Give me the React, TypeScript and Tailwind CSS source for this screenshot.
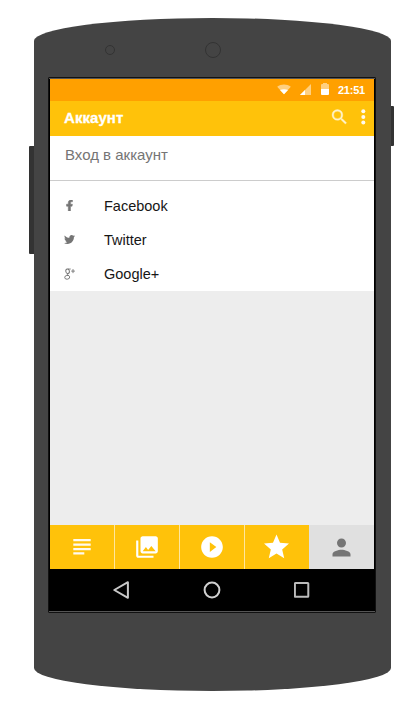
import React from "react";
import { FaFacebookF, FaTwitter } from "react-icons/fa";

function StatusBar() {
  return (
    <div className="flex h-[22px] shrink-0 items-center bg-[#ffa000] pl-[227px] text-white">
      <svg className="-mt-px h-[11px] w-[14px] shrink-0" viewBox="0 0 15 11">
        <path d="M0.2 2.6C4.4-.5 10.6-.5 14.8 2.6L7.5 10.7Z" fill="#fff" fillOpacity=".5" />
        <path d="M3.2 6C5.8 4.8 9.2 4.8 11.8 6L7.5 10.7Z" fill="#fff" />
      </svg>
      <svg className="-mt-px ml-[9px] h-[11px] w-[11px] shrink-0" viewBox="0 0 11 11">
        <path d="M0 11L11 0V11Z" fill="#fff" fillOpacity=".5" />
        <path d="M0 11L5 6V11Z" fill="#fff" />
      </svg>
      <svg className="-mt-[3px] ml-[10px] h-[12px] w-[8px] shrink-0" viewBox="0 0 8 12">
        <path d="M0 2q0-1 1-1H2V0H6V1H7q1 0 1 1V6H0Z" fill="#fff" fillOpacity=".5" />
        <path d="M0 6H8V11q0 1-1 1H1q-1 0-1-1Z" fill="#fff" />
      </svg>
      <span className="ml-[9px] text-[11px] font-bold leading-none tracking-[-0.25px]">21:51</span>
    </div>
  );
}

function AppBar() {
  return (
    <div className="flex h-[35px] shrink-0 items-center bg-[#ffc20a] pl-[14px] text-white">
      <h1 className="w-[265px] pb-[2px] text-[15px] font-bold leading-none tracking-[0.05px] [-webkit-text-stroke:0.3px_#fff]">Аккаунт</h1>
      <svg className="-mt-[4px] h-[20px] w-[21px] shrink-0 fill-[#fff3cb] stroke-[#fff3cb] stroke-[0.4]" viewBox="0 0 24 24">
        <path d="M15.5 14h-.79l-.28-.27A6.47 6.47 0 0 0 16 9.5 6.5 6.5 0 1 0 9.5 16c1.61 0 3.09-.59 4.23-1.57l.27.28v.79l5 4.99L20.49 19l-4.99-5zm-6 0a4.5 4.5 0 1 1 0-9 4.5 4.5 0 0 1 0 9z" />
      </svg>
      <svg className="-mt-[4px] ml-[11px] h-[16px] w-[5px] shrink-0 fill-[#fffaf0]" viewBox="0 0 5 16">
        <circle cx="2.3" cy="2.3" r="2" />
        <circle cx="2.3" cy="7.9" r="2" />
        <circle cx="2.3" cy="13.5" r="2" />
      </svg>
    </div>
  );
}

function GooglePlus() {
  return (
    <svg className="h-[12px] w-[12px]" viewBox="0 0 12 12" fill="none" stroke="#757575">
      <ellipse cx="3.6" cy="3.3" rx="1.8" ry="2.3" strokeWidth="1" transform="rotate(-8 3.6 3.3)" />
      <path d="M3.8 1H6.8" strokeWidth=".8" />
      <path d="M4.3 5.6C2.4 6.6 3.4 6.9 4.9 7.6" strokeWidth="1" />
      <ellipse cx="3.2" cy="9.3" rx="2.5" ry="1.9" strokeWidth=".9" transform="rotate(-10 3.2 9.3)" />
      <path d="M9 1.1V5.1M7.2 3.1H10.9" strokeWidth=".9" />
    </svg>
  );
}

function Row({ icon, label }: { icon: React.ReactNode; label: string }) {
  return (
    <li className="flex h-[34px] items-center pl-[14px]">
      <span className="flex w-[40px] items-center text-[#757575]">{icon}</span>
      <span className="text-[14.5px] leading-none text-[#161616]">{label}</span>
    </li>
  );
}

function TabBar() {
  return (
    <nav className="grid h-[44px] shrink-0 grid-cols-[65px_65px_65px_64px_1fr] bg-[#ffc20a] text-white">
      <div className="flex items-center justify-center border-r border-[#ffe69d]">
        <svg className="h-[16px] w-[18px]" viewBox="0 0 18 16" fill="#fffaf0">
          <path d="M.3 0H17.7V2.2H.3ZM.3 4.6H17.7V6.8H.3ZM.3 9.1H17.7V11.3H.3ZM.3 13.3H11.3V15.5H.3Z" />
        </svg>
      </div>
      <div className="flex items-center justify-center border-r border-[#ffe69d]">
        <svg className="h-[26px] w-[26px]" viewBox="0 0 24 24" fill="currentColor">
          <path d="M22 16V4c0-1.1-.9-2-2-2H8c-1.1 0-2 .9-2 2v12c0 1.1.9 2 2 2h12c1.1 0 2-.9 2-2zm-11-4l2.03 2.71L16 11l4 5H8l3-4zM2 6v14c0 1.1.9 2 2 2h14v-2H4V6H2z" />
        </svg>
      </div>
      <div className="flex items-center justify-center border-r border-[#ffe69d]">
        <svg className="h-[26px] w-[26px]" viewBox="0 0 24 24" fill="currentColor">
          <path d="M12 2C6.48 2 2 6.48 2 12s4.48 10 10 10 10-4.48 10-10S17.52 2 12 2zm-2 14.5v-9l6 4.5-6 4.5z" />
        </svg>
      </div>
      <div className="flex items-center justify-center pr-px">
        <svg className="h-[30px] w-[31px]" viewBox="0 0 24 24" fill="currentColor">
          <path d="M12 17.27L18.18 21l-1.64-7.03L22 9.24l-7.19-.61L12 2 9.19 8.63 2 9.24l5.46 4.73L5.82 21z" />
        </svg>
      </div>
      <div className="flex items-center justify-center bg-[#e0e0e0] text-[#757575]">
        <svg className="h-[27px] w-[27px]" viewBox="0 0 24 24" fill="currentColor">
          <path d="M12 12c2.21 0 4-1.79 4-4s-1.79-4-4-4-4 1.79-4 4 1.79 4 4 4zm0 2c-2.67 0-8 1.34-8 4v2h16v-2c0-2.66-5.33-4-8-4z" />
        </svg>
      </div>
    </nav>
  );
}

function SystemNav() {
  return (
    <div className="flex h-[42px] shrink-0 items-center bg-black pl-[63px]">
      <svg className="h-[18px] w-[17px]" viewBox="0 0 17 18" fill="none" stroke="#c8c8c8" strokeWidth="2" strokeLinejoin="round">
        <path d="M14.9 1.2V16.8L1.3 9Z" />
      </svg>
      <svg className="ml-[73px] h-[18px] w-[18px]" viewBox="0 0 18 18" fill="none" stroke="#d0d0d0" strokeWidth="2">
        <circle cx="9" cy="9" r="7.4" />
      </svg>
      <svg className="ml-[73px] h-[16px] w-[16px]" viewBox="0 0 16 16" fill="none" stroke="#bcbcbc" strokeWidth="2">
        <rect x=".9" y="1" width="13.4" height="13.8" rx=".6" />
      </svg>
    </div>
  );
}

export default function App() {
  return (
    <main className="flex h-[708px] w-[405px] items-start overflow-hidden bg-white pl-[29px] font-['Liberation_Sans',Arial,sans-serif]">
      <div className="mt-[146px] h-[108px] w-[5px] rounded-l-[1px] bg-[#333]" />
      <div className="mt-[18px] flex h-[673px] w-[356.5px] flex-col rounded-[50%/23px] bg-[#444]">
        <div className="flex h-[59px] shrink-0 items-center pt-[5px] pl-[71px]">
          <span className="h-[10px] w-[10px] rounded-full border border-[#333]" />
          <span className="ml-[90px] h-[16px] w-[16px] rounded-full border border-[#333]" />
        </div>
        <div className="ml-[14px] flex h-[536px] w-[328px] shrink-0 flex-col rounded-[1px] border border-[#111] bg-[#555] pt-px pb-px">
          <div className="flex min-h-0 flex-1 flex-col border-x border-black">
            <StatusBar />
            <AppBar />
            <h2 className="flex h-[45px] shrink-0 items-center border-b border-[#ccc] bg-white pb-[7px] pl-[15px] text-[15px] leading-none text-[#757575]">
              Вход в аккаунт
            </h2>
            <ul className="h-[110px] shrink-0 bg-white pt-[8px]">
              <Row icon={<FaFacebookF className="-mt-[2px] ml-[2px] h-[11px] w-[7px] stroke-current stroke-[25]" />} label="Facebook" />
              <Row icon={<FaTwitter className="-mt-px h-[11px] w-[11px]" />} label="Twitter" />
              <Row icon={<GooglePlus />} label="Google+" />
            </ul>
            <div className="flex-1 bg-[#ededed]" />
            <TabBar />
            <SystemNav />
          </div>
        </div>
      </div>
      <div className="mt-[106px] h-[40px] w-[3px] rounded-r-[1px] bg-[#333]" />
    </main>
  );
}
